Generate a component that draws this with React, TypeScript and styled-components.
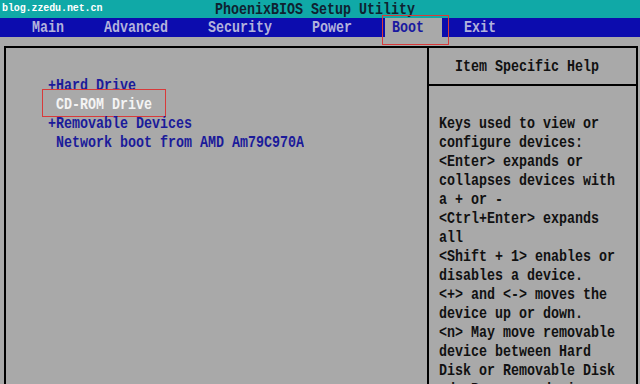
import styled, { createGlobalStyle, css } from "styled-components";

const menu = ["Main", "Advanced", "Security", "Power", "Boot", "Exit"];

const devices = [
  { text: "+Hard Drive" },
  { text: " CD-ROM Drive", selected: true },
  { text: "+Removable Devices" },
  { text: " Network boot from AMD Am79C970A" },
];

const help = [
  "Keys used to view or",
  "configure devices:",
  "<Enter> expands or",
  "collapses devices with",
  "a + or -",
  "<Ctrl+Enter> expands",
  "all",
  "<Shift + 1> enables or",
  "disables a device.",
  "<+> and <-> moves the",
  "device up or down.",
  "<n> May move removable",
  "device between Hard",
  "Disk or Removable Disk",
  "<d> Remove a device",
];

export default function App() {
  return (
    <>
      <GlobalStyle />
      <Screen>
        <TitleBar>
          <Watermark>blog.zzedu.net.cn</Watermark>
          <Glyphs>PhoenixBIOS Setup Utility</Glyphs>
        </TitleBar>
        <MenuBar>
          {menu.map((item) => (
            <MenuItem key={item} $active={item === "Boot"}>
              <Glyphs>{item}</Glyphs>
              {item === "Boot" && <MenuCallout />}
            </MenuItem>
          ))}
        </MenuBar>
        <Frame>
          <DeviceList>
            {devices.map((d) => (
              <Entry key={d.text} $selected={d.selected}>
                <Glyphs>{d.text}</Glyphs>
                {d.selected && <EntryCallout />}
              </Entry>
            ))}
          </DeviceList>
          <HelpPanel>
            <HelpHeader>
              <Glyphs>Item Specific Help</Glyphs>
            </HelpHeader>
            <HelpBody>
              {help.map((line, i) => (
                <HelpLine key={i}>
                  <Glyphs>{line}</Glyphs>
                </HelpLine>
              ))}
            </HelpBody>
          </HelpPanel>
        </Frame>
      </Screen>
    </>
  );
}

const GlobalStyle = createGlobalStyle`
  html, body {
    margin: 0;
    padding: 0;
    width: 640px;
    height: 384px;
    overflow: hidden;
    background: #a9a9a9;
  }
`;

const Screen = styled.div`
  width: 640px;
  height: 384px;
  overflow: hidden;
  display: flex;
  flex-direction: column;
  background: #a9a9a9;
  font-family: "Liberation Mono", "DejaVu Sans Mono", monospace;
  font-size: 13.33px;
  font-weight: bold;
  white-space: pre;
`;

// BIOS font is tall and narrow: stretch the glyphs vertically
const Glyphs = styled.span`
  display: inline-block;
  transform: scaleY(1.25);
`;

const TitleBar = styled.div`
  position: relative;
  height: 18px;
  flex: none;
  display: flex;
  align-items: center;
  justify-content: center;
  padding-right: 10px;
  background: #10a9a7;
  color: #0f2230;
`;

const Watermark = styled.span`
  position: absolute;
  left: 2px;
  top: 3px;
  font-size: 10px;
  line-height: 12px;
  color: #ffffff;
  letter-spacing: -0.1px;
`;

const MenuBar = styled.div`
  height: 19px;
  flex: none;
  display: flex;
  align-items: stretch;
  gap: 40px;
  padding-left: 32px;
  background: #0c0cae;
`;

const MenuItem = styled.div<{ $active?: boolean }>`
  position: relative;
  display: flex;
  align-items: center;
  color: #b2b2dc;

  ${(p) =>
    p.$active &&
    css`
      background: #a9a9a9;
      color: #1a1aa0;
      padding: 0 18px 0 7px;
      margin: 0 -18px 0 -7px;
    `}
`;

const MenuCallout = styled.div`
  position: absolute;
  left: -3px;
  top: -3px;
  width: 65px;
  height: 28px;
  border: 1px solid #d83a3a;
`;

const Frame = styled.div`
  flex: none;
  height: 360px;
  width: 630px;
  margin: 9px 0 0 4px;
  border: 2px solid #000;
  display: grid;
  grid-template-columns: 421px 209px;
`;

const DeviceList = styled.div`
  padding: 28px 0 0 42px;
  display: flex;
  flex-direction: column;
`;

const Entry = styled.div<{ $selected?: boolean }>`
  position: relative;
  height: 19px;
  line-height: 19px;
  color: ${(p) => (p.$selected ? "#f4f4f4" : "#1b1b9a")};
`;

const EntryCallout = styled.div`
  position: absolute;
  left: -6px;
  top: -6px;
  width: 122px;
  height: 26px;
  border: 1px solid #d83a3a;
`;

const HelpPanel = styled.div`
  border-left: 2px solid #000;
  display: flex;
  flex-direction: column;
`;

const HelpHeader = styled.div`
  height: 36px;
  display: flex;
  align-items: center;
  justify-content: center;
  padding-right: 11px;
  border-bottom: 2px solid #000;
  color: #111;
`;

const HelpBody = styled.div`
  padding: 28px 0 0 10px;
  display: flex;
  flex-direction: column;
  color: #111;
`;

const HelpLine = styled.div`
  height: 19px;
  line-height: 19px;
`;
